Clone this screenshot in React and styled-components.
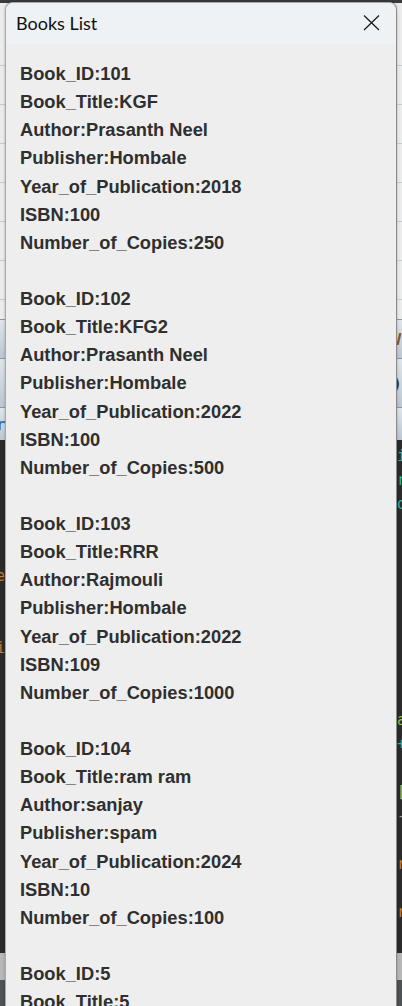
import React from "react";
import styled, { createGlobalStyle } from "styled-components";

const GlobalStyle = createGlobalStyle`
  html, body {
    margin: 0;
    padding: 0;
    width: 402px;
    height: 1006px;
    overflow: hidden;
  }
  * {
    box-sizing: border-box;
  }
`;

const books = [
  {
    Book_ID: "101",
    Book_Title: "KGF",
    Author: "Prasanth Neel",
    Publisher: "Hombale",
    Year_of_Publication: "2018",
    ISBN: "100",
    Number_of_Copies: "250"
  },
  {
    Book_ID: "102",
    Book_Title: "KFG2",
    Author: "Prasanth Neel",
    Publisher: "Hombale",
    Year_of_Publication: "2022",
    ISBN: "100",
    Number_of_Copies: "500"
  },
  {
    Book_ID: "103",
    Book_Title: "RRR",
    Author: "Rajmouli",
    Publisher: "Hombale",
    Year_of_Publication: "2022",
    ISBN: "109",
    Number_of_Copies: "1000"
  },
  {
    Book_ID: "104",
    Book_Title: "ram ram",
    Author: "sanjay",
    Publisher: "spam",
    Year_of_Publication: "2024",
    ISBN: "10",
    Number_of_Copies: "100"
  },
  {
    Book_ID: "5",
    Book_Title: "5",
    Author: "5",
    Publisher: "5",
    Year_of_Publication: "5",
    ISBN: "5",
    Number_of_Copies: "5"
  }
];

// slivers of the code editor that peek out on both sides of the dialog
const editorLines = [
  { right: "i", rc: "#2bb39a" },
  { right: "r", rc: "#2bb39a" },
  { right: "o", rc: "#2bb39a" },
  {},
  {},
  { left: "e", lc: "#c57a2c" },
  {},
  {},
  { left: "i", lc: "#c57a2c" },
  {},
  {},
  { right: "a", rc: "#8fc43b" },
  { right: "+", rc: "#2bb39a" },
  {},
  { right: "[", rc: "#c9b558" },
  { right: "-", rc: "#9a9aa8" },
  {},
  { right: "r", rc: "#c57a2c" },
  {},
  { right: "r", rc: "#c57a2c" }
];

const Desktop = styled.div`
  position: relative;
  width: 402px;
  height: 1006px;
  display: flex;
  flex-direction: column;
  overflow: hidden;
  background: #2b2b2b;
`;

const TopStrip = styled.div`
  height: 3px;
  background: #3a3a3a;
`;

const TableArea = styled.div`
  height: 316px;
  background: #ececec;
  display: flex;
  flex-direction: column;
  padding-top: 24px;
`;

const TableRow = styled.div`
  height: 39px;
  border-bottom: 1px solid #c4ccd4;
`;

const Toolbar = styled.div`
  height: 121px;
  display: flex;
  flex-direction: column;
`;

const ToolRow = styled.div`
  height: ${(p) => p.$h}px;
  background: linear-gradient(#dfe5ea, #bcc7d1);
  border-top: 1px solid #8c98a3;
  display: flex;
  justify-content: space-between;
  align-items: center;
  font-family: "DejaVu Sans Mono", monospace;
  font-size: 16px;
  font-weight: bold;
  color: #404040;
`;

const ToolGlyph = styled.span`
  color: ${(p) => p.color || "#404040"};
  margin-left: ${(p) => (p.$shift ? "-4px" : "0")};
`;

const Editor = styled.div`
  height: 513px;
  background: #2b2b2b;
  padding-top: 4px;
  display: flex;
  flex-direction: column;
`;

const CodeLine = styled.div`
  height: 24px;
  display: flex;
  justify-content: space-between;
  align-items: center;
  font-family: "DejaVu Sans Mono", monospace;
  font-size: 15px;
`;

const Glyph = styled.span`
  color: ${(p) => p.color || "transparent"};
  width: 5px;
  overflow: hidden;
  display: flex;
  justify-content: ${(p) => (p.$side === "left" ? "flex-end" : "flex-start")};
`;

const StatusBar = styled.div`
  height: 27px;
  background: #b7b7b7;
`;

const Footer = styled.div`
  flex: 1;
  background: #4c5256;
`;

const Dialog = styled.div`
  position: absolute;
  top: 2px;
  left: 5px;
  width: 392px;
  bottom: -40px;
  background: #eeeeee;
  border: 1px solid #a8a8a8;
  border-right-color: #8a8a8a;
  border-radius: 8px 8px 0 0;
  box-shadow: 0 0 3px rgba(0, 0, 0, 0.25);
  display: flex;
  flex-direction: column;
  overflow: hidden;
`;

const TitleBar = styled.div`
  height: 41px;
  flex: none;
  background: #eef2f5;
  display: flex;
  align-items: center;
  justify-content: space-between;
  padding: 0 16px 0 10px;
`;

const Title = styled.span`
  font-family: Lato, "Noto Sans", sans-serif;
  font-size: 18px;
  color: #111;
  padding-bottom: 1px;
`;

const CloseButton = styled.button`
  border: none;
  background: none;
  padding: 0;
  width: 17px;
  height: 17px;
  display: flex;
  cursor: pointer;
  margin-bottom: 2px;
`;

const Content = styled.div`
  flex: 1;
  padding: 16px 0 0 14px;
  font-family: "Liberation Sans", Arial, sans-serif;
  font-weight: bold;
  font-size: 18.3px;
  line-height: 28.125px;
  color: #2f2f2f;
`;

const Record = styled.div`
  margin-bottom: 28.125px;
`;

const Field = styled.div`
  white-space: nowrap;
`;

const CloseIcon = () => (
  <svg width="17" height="17" viewBox="0 0 17 17">
    <path
      d="M1 1.5 L16 16 M16 1.5 L1 16"
      stroke="#1b1b1b"
      strokeWidth="1.25"
      fill="none"
    />
  </svg>
);

const BookRecord = ({ book }) => (
  <Record>
    {Object.entries(book).map(([key, value]) => (
      <Field key={key}>
        {key}:{value}
      </Field>
    ))}
  </Record>
);

export default function App() {
  return (
    <>
      <GlobalStyle />
      <Desktop>
        <TopStrip />
        <TableArea>
          {[0, 1, 2, 3, 4, 5, 6].map((i) => (
            <TableRow key={i} />
          ))}
        </TableArea>
        <Toolbar>
          <ToolRow $h={39}>
            <span />
            <ToolGlyph color="#8a5a1e">V</ToolGlyph>
          </ToolRow>
          <ToolRow $h={49}>
            <span />
            <ToolGlyph>)</ToolGlyph>
          </ToolRow>
          <ToolRow $h={33}>
            <ToolGlyph color="#3b6fb0" $shift>
              r
            </ToolGlyph>
            <span />
          </ToolRow>
        </Toolbar>
        <Editor>
          {editorLines.map((line, i) => (
            <CodeLine key={i}>
              <Glyph $side="left" color={line.lc}>
                {line.left || ""}
              </Glyph>
              <Glyph $side="right" color={line.rc}>
                {line.right || ""}
              </Glyph>
            </CodeLine>
          ))}
        </Editor>
        <StatusBar />
        <Footer />
        <Dialog>
          <TitleBar>
            <Title>Books List</Title>
            <CloseButton aria-label="Close">
              <CloseIcon />
            </CloseButton>
          </TitleBar>
          <Content>
            {books.map((book) => (
              <BookRecord key={book.Book_ID} book={book} />
            ))}
          </Content>
        </Dialog>
      </Desktop>
    </>
  );
}
